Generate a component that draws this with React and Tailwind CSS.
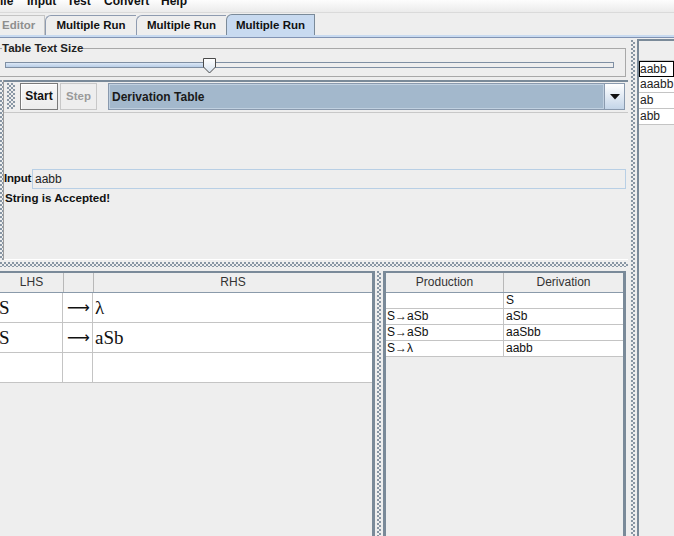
const dotsV = "bg-[radial-gradient(circle_at_1px_1px,#8896a4_0.8px,transparent_1.1px),radial-gradient(circle_at_3px_3px,#8896a4_0.8px,transparent_1.1px)] bg-[length:4px_4px]";

function Tab({ children, selected, w }) {
  return (
    <div
      className={
        selected
          ? "h-[21px] bg-[#c8daf0] border-t border-l border-r border-[#7a8a99] rounded-tl-[6px] font-bold text-center leading-[20px] text-[11.5px] text-[#111]"
          : "h-[20px] border-t border-l border-[#8e9bb0] rounded-tl-[6px] font-bold text-center leading-[19px] text-[11.5px] text-[#111]"
      }
      style={{ width: w }}
    >
      {children}
    </div>
  );
}

function GrammarRow({ lhs, rhs }) {
  return (
    <div className="flex h-[30px] border-b border-[#c4c4c4] bg-white font-['Liberation_Serif','Times_New_Roman',serif] text-[19px] leading-[29px] text-[#111]">
      <div className="w-[64px] border-r border-[#c4c4c4] -ml-[1px] overflow-hidden">{lhs}</div>
      <div className="w-[30px] border-r border-[#c4c4c4] pl-[4px] font-['DejaVu_Sans',sans-serif] text-[16px]">{lhs ? "⟶" : ""}</div>
      <div className="flex-1 pl-[2px]">{rhs}</div>
    </div>
  );
}

function DerivRow({ p, d }) {
  return (
    <div className="flex h-[16px] border-b border-[#c4c4c4] bg-white text-[12px] leading-[15px] text-[#111]">
      <div className="w-[118px] border-r border-[#c4c4c4] pl-[1px]">{p}</div>
      <div className="flex-1 pl-[2px]">{d}</div>
    </div>
  );
}

export default function App() {
  return (
    <div className="w-[674px] h-[536px] overflow-hidden bg-[#eeeeee] flex flex-col font-['Liberation_Sans',Arial,sans-serif] text-[12px] text-[#222]">
      {/* Menu bar */}
      <div className="h-[12px] shrink-0 overflow-hidden bg-gradient-to-b from-[#fdfdfd] to-[#ebebeb]">
        <div className="flex font-bold text-[12px] leading-[14px] -mt-[6px] text-[#111]">
          <span className="w-[27px]">ile</span>
          <span className="w-[40px]">Input</span>
          <span className="w-[37px]">Test</span>
          <span className="w-[57px]">Convert</span>
          <span>Help</span>
        </div>
      </div>
      <div className="h-[1px] shrink-0 bg-[#dadada]" />
      {/* Tabs */}
      <div className="h-[22px] shrink-0 flex items-end">
        <div className="w-[45px] h-[20px] border-t border-r border-[#c4c4c4] text-[#8e8e8e] font-bold pl-[2px] leading-[19px] text-[11.5px]">
          Editor
        </div>
        <Tab w={91}>Multiple Run</Tab>
        <Tab w={90}>Multiple Run</Tab>
        <Tab w={89} selected>Multiple Run</Tab>
        <div className="flex-1" />
      </div>
      <div className="h-[2px] shrink-0 bg-[#c8daf0]" />
      <div className="h-[1px] shrink-0 bg-[#8193b3]" />

      {/* Main */}
      <div className="h-[498px] flex">
        {/* Left column */}
        <div className="w-[628px] flex flex-col">
          {/* Slider panel */}
          <div className="h-[42px] shrink-0 pt-[3px] pr-[2px]">
            <fieldset className="h-[36px] border-t border-r border-b border-l-0 border-[#a8a8a8] m-0 p-0">
              <legend className="ml-[2px] px-0 font-bold text-[11.5px] leading-[14px] text-[#222]">Table Text Size</legend>
              <div className="relative ml-[5px] w-[609px] h-[17px] mt-[2px]">
                <div className="absolute left-0 right-0 top-[5px] h-[6px] border border-[#7f8fa3] bg-[#eeeeee] flex">
                  <div className="w-[200px] h-full bg-gradient-to-b from-[#dce8f6] to-[#b8cde6]" />
                </div>
                <svg className="absolute left-[197px] top-0" width="15" height="17" viewBox="0 0 15 17">
                  <defs>
                    <linearGradient id="thumb" x1="0" y1="0" x2="0" y2="1">
                      <stop offset="0" stopColor="#ffffff" />
                      <stop offset="1" stopColor="#d6e2ef" />
                    </linearGradient>
                  </defs>
                  <path d="M1.5 1.5 H13.5 V10 L7.5 16 L1.5 10 Z" fill="url(#thumb)" stroke="#4a4a4a" strokeWidth="1" />
                </svg>
              </div>
            </fieldset>
          </div>

          {/* Lower section */}
          <div className="h-[180px] shrink-0 flex">
            <div className={"w-[3px] " + dotsV} />
            <div className="w-[1px] bg-[#9c9c9c]" />
            <div className="flex-1 flex flex-col border-t-2 border-[#7a8a99] border-b border-b-white">
              {/* Toolbar */}
              <div className="h-[30px] shrink-0 flex items-start pt-[1px]">
                <div className={"ml-[3px] w-[8px] h-[26px] " + dotsV} />
                <div className="ml-[5px] w-[38px] h-[27px] border border-[#7a7a7a] bg-gradient-to-b from-[#f8f8f8] to-[#ececec] shadow-[inset_1px_1px_0_#ffffff] font-bold text-[12px] leading-[25px] text-center text-[#111]">
                  Start
                </div>
                <div className="ml-[2px] w-[37px] h-[27px] border border-[#c8c8c8] font-bold text-[11.5px] leading-[25px] text-center text-[#9a9a9a]">
                  Step
                </div>
                <div className="ml-[11px] w-[517px] h-[27px] border border-[#8a9aae] bg-[#a3b8cc] flex">
                  <div className="flex-1 pl-[2px] font-bold text-[12px] leading-[25px] text-[#1a1a1a] border border-[#c0d0e0]">
                    Derivation Table
                  </div>
                  <div className="w-[20px] border-l border-[#8a9aae] bg-gradient-to-b from-[#ffffff] to-[#c4d5e8] flex items-center justify-center">
                    <svg width="10" height="6" viewBox="0 0 10 6">
                      <path d="M0 0 H10 L5 5.5 Z" fill="#111" />
                    </svg>
                  </div>
                </div>
              </div>
              <div className="h-[1px] shrink-0 bg-[#c8c8c8]" />
              {/* Content */}
              <div className="flex-1 flex flex-col pt-[56px]">
                <div className="flex items-center h-[20px]">
                  <span className="w-[28px] whitespace-nowrap font-bold text-[11.5px] tracking-[-0.2px] text-[#111]">Input</span>
                  <div className="w-[594px] h-[20px] border border-[#b8cfe5] pl-[2px] leading-[18px] text-[12px] text-[#222]">
                    aabb
                  </div>
                </div>
                <div className="mt-[2px] pl-[1px] font-bold text-[11.6px] leading-[14px] text-[#111]">
                  String is Accepted!
                </div>
              </div>
            </div>
          </div>

          {/* Horizontal divider */}
          <div className="h-[10px] shrink-0 pt-[2px]">
            <div className={"h-[5px] " + dotsV} />
          </div>

          {/* Bottom tables */}
          <div className="flex-1 flex pt-[1px]">
            <div className="w-[375px] border-t-2 border-r-[3px] border-[#7a8a99] flex flex-col">
              <div className="flex h-[20px] border-b border-[#8a9aaa] text-[12px] leading-[19px] text-[#333]">
                <div className="w-[64px] border-r border-[#b8b8b8] text-center">LHS</div>
                <div className="w-[30px] border-r border-[#b8b8b8]" />
                <div className="flex-1 text-center">RHS</div>
              </div>
              <GrammarRow lhs="S" rhs="λ" />
              <GrammarRow lhs="S" rhs="aSb" />
              <GrammarRow lhs="" rhs="" />
            </div>
            <div className="w-[8px] flex justify-center">
              <div className={"w-[4px] h-full " + dotsV} />
            </div>
            <div className="w-[243px] border-t-2 border-l-[3px] border-r-[3px] border-[#7a8a99] flex flex-col">
              <div className="flex h-[20px] border-b border-[#8a9aaa] text-[12px] leading-[19px] text-[#333]">
                <div className="w-[118px] border-r border-[#b8b8b8] text-center">Production</div>
                <div className="flex-1 text-center">Derivation</div>
              </div>
              <DerivRow p="" d="S" />
              <DerivRow p="S→aSb" d="aSb" />
              <DerivRow p="S→aSb" d="aaSbb" />
              <DerivRow p="S→λ" d="aabb" />
            </div>
          </div>
        </div>

        {/* Main vertical divider */}
        <div className="w-[9px] flex justify-center pt-[2px]">
          <div className={"w-[4px] h-full " + dotsV} />
        </div>

        {/* Right panel */}
        <div className="flex-1 pt-[1px]">
          <div className="h-full border-l-2 border-t-2 border-[#7a8a99] flex flex-col">
            <div className="h-[20px] border-b border-[#c4c4c4]" />
            <div className="h-[16px] bg-white border border-black leading-[14px] text-[12px] text-[#222]">aabb</div>
            <div className="h-[16px] bg-white border-b border-[#c4c4c4] leading-[15px] text-[12px] text-[#222] pl-[1px]">aaabb</div>
            <div className="h-[16px] bg-white border-b border-[#c4c4c4] leading-[15px] text-[12px] text-[#222] pl-[1px]">ab</div>
            <div className="h-[16px] bg-white border-b border-[#c4c4c4] leading-[15px] text-[12px] text-[#222] pl-[1px]">abb</div>
          </div>
        </div>
      </div>
    </div>
  );
}
